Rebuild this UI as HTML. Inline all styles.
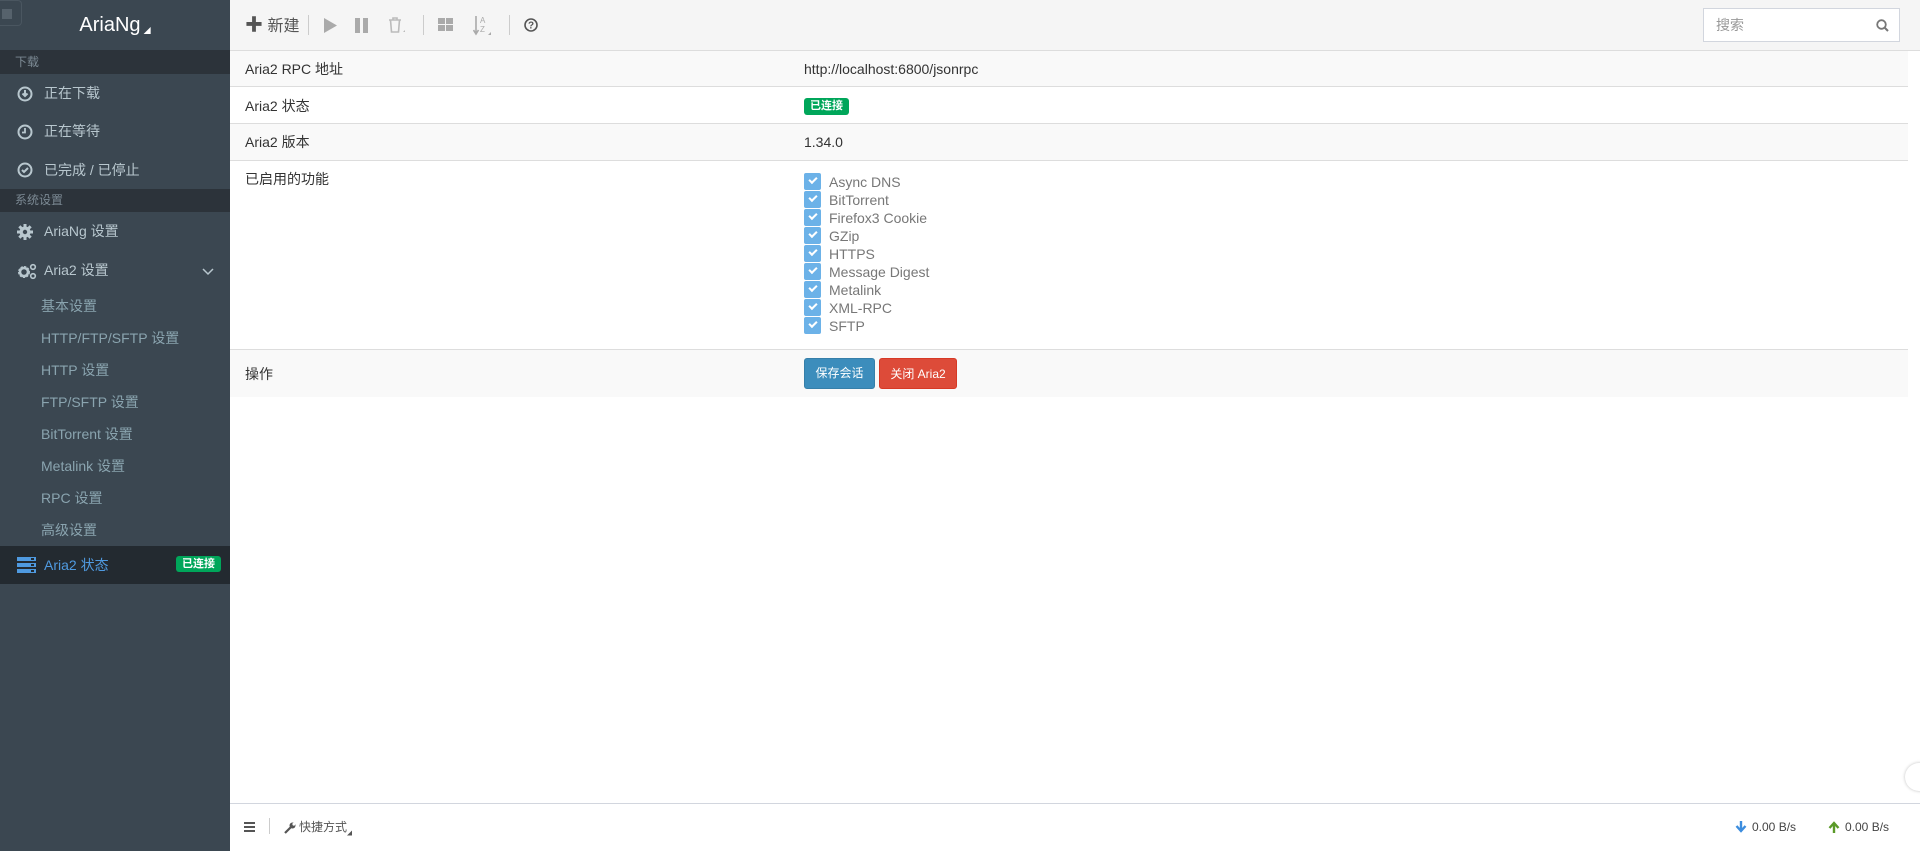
<!DOCTYPE html>
<html><head><meta charset="utf-8">
<style>
*{box-sizing:border-box;margin:0;padding:0}
body{width:1920px;height:851px;overflow:hidden;font-family:"Liberation Sans","Noto Sans CJK SC",sans-serif;font-size:14px;color:#333;background:#fff;position:relative}
.sb{position:absolute;left:0;top:0;width:230px;height:851px;background:#3b4751}
.logo{height:51px;border-bottom:1px solid #2c333a;color:#fff;font-size:20px;text-align:center;line-height:50px;position:relative}
.logo .sq{position:absolute;left:0;top:0;width:22px;height:26px;border:1px solid #4a5660;border-left:none;border-radius:0 4px 4px 0}
.logo .sq i{position:absolute;left:2px;top:8px;width:10px;height:10px;background:#56626c}
.sec{height:23px;background:#2c333a;color:#7c8a94;font-size:12px;line-height:23px;padding-left:15px}
.it{height:38px;line-height:38px;color:#b8c7ce;padding-left:44px;position:relative;font-size:14px}
.it svg{position:absolute;left:17px;top:12px}
.sub{height:32px;line-height:32px;color:#8aa4af;padding-left:41px}
.act{height:38px;line-height:38px;background:#232a30;color:#4f9ae0;padding-left:44px;position:relative;margin-top:0}
.badge{display:inline-block;background:#00a65a;color:#fff;font-size:11px;font-weight:bold;border-radius:3px;line-height:17px;padding:0 6px}
.tb{position:absolute;left:230px;top:0;right:0;height:51px;background:#f5f5f5;border-bottom:1px solid #ddd}
.tb .x{position:absolute;top:0;line-height:50px;color:#555;font-size:16px}
.sep{position:absolute;top:15px;width:1px;height:20px;background:#ccc}
.search{position:absolute;left:1473px;top:8px;width:197px;height:34px;border:1px solid #d2d6de;background:#fff;color:#999;font-size:14px;line-height:32px;padding-left:12px}
.tbl{position:absolute;left:230px;top:51px;width:1678px}
.row{position:relative;border-bottom:1px solid #ddd}
.row.g{background:#f9f9f9}
.lab,.val{position:absolute;top:9px;line-height:18px}
.lab{left:15px}
.val{left:574px}
.chk{height:18px;line-height:18px;color:#777;position:relative;padding-left:25px}
.chk i{position:absolute;left:0;top:0;width:17px;height:17px;background:#6cb2e8;border-radius:2px}
.chk i:after{content:"";position:absolute;left:5px;top:4px;width:6px;height:3px;border-left:2px solid #fff;border-bottom:2px solid #fff;transform:rotate(-45deg)}
.btn{position:absolute;top:8px;height:31px;line-height:28px;color:#fff;font-size:12px;border-radius:3px;text-align:center}
.ft{position:absolute;left:230px;right:0;top:803px;height:48px;border-top:1px solid #d2d6de;background:#fff;font-size:12px;color:#444}
</style></head><body>
<div class="sb">
 <div class="logo"><div class="sq"><i></i></div>AriaNg<span style="font-size:7px;vertical-align:-2px;margin-left:3px">◢</span></div>
 <div class="sec">下载</div>
 <div class="it"><svg width="16" height="16" viewBox="0 0 16 16"><circle cx="8" cy="8" r="6.5" fill="none" stroke="#b8c7ce" stroke-width="2"/><path d="M8 4v6M5.5 7.5L8 10l2.5-2.5" stroke="#b8c7ce" stroke-width="2" fill="none"/></svg>正在下载</div>
 <div class="it"><svg width="16" height="16" viewBox="0 0 16 16"><circle cx="8" cy="8" r="6.5" fill="none" stroke="#b8c7ce" stroke-width="2"/><path d="M8 4v4.5H5" stroke="#b8c7ce" stroke-width="1.8" fill="none"/></svg>正在等待</div>
 <div class="it" style="height:39px;line-height:40px"><svg width="16" height="16" viewBox="0 0 16 16"><circle cx="8" cy="8" r="6.5" fill="none" stroke="#b8c7ce" stroke-width="2"/><path d="M5 8l2 2 4-4" stroke="#b8c7ce" stroke-width="2" fill="none"/></svg>已完成 / 已停止</div>
 <div class="sec">系统设置</div>
 <div class="it" style="height:39px;line-height:39px"><svg width="16" height="16" viewBox="0 0 16 16"><g fill="#b8c7ce"><rect x="6.5" y="0" width="3" height="16"/><rect x="0" y="6.5" width="16" height="3"/><rect x="6.5" y="0" width="3" height="16" transform="rotate(45 8 8)"/><rect x="6.5" y="0" width="3" height="16" transform="rotate(-45 8 8)"/><circle cx="8" cy="8" r="5.5"/></g><circle cx="8" cy="8" r="2.2" fill="#3b4751"/></svg>AriaNg 设置</div>
 <div class="it" style="height:39px;line-height:39px"><svg width="20" height="18" viewBox="0 0 20 18"><circle cx="7" cy="9" r="4.5" fill="none" stroke="#b8c7ce" stroke-width="3" stroke-dasharray="2 1"/><circle cx="7" cy="9" r="4" fill="none" stroke="#b8c7ce" stroke-width="2.5"/><circle cx="16" cy="4" r="2.3" fill="none" stroke="#b8c7ce" stroke-width="1.6"/><circle cx="16" cy="13" r="2.3" fill="none" stroke="#b8c7ce" stroke-width="1.6"/></svg>Aria2 设置<svg style="left:202px;top:17px" width="12" height="8" viewBox="0 0 12 8"><path d="M1 1l5 5 5-5" stroke="#b8c7ce" stroke-width="1.5" fill="none"/></svg></div>
 <div class="sub">基本设置</div>
 <div class="sub">HTTP/FTP/SFTP 设置</div>
 <div class="sub">HTTP 设置</div>
 <div class="sub">FTP/SFTP 设置</div>
 <div class="sub">BitTorrent 设置</div>
 <div class="sub">Metalink 设置</div>
 <div class="sub">RPC 设置</div>
 <div class="sub">高级设置</div>
 <div class="act"><svg style="position:absolute;left:17px;top:11px" width="19" height="16" viewBox="0 0 19 16"><rect x="0" y="0" width="19" height="4" fill="#4f9ae0"/><rect x="0" y="6" width="19" height="4" fill="#4f9ae0"/><rect x="0" y="12" width="19" height="4" fill="#4f9ae0"/><rect x="14" y="1" width="3" height="2" fill="#232a30"/><rect x="14" y="7" width="3" height="2" fill="#232a30"/><rect x="14" y="13" width="3" height="2" fill="#232a30"/></svg>Aria2 状态<span class="badge" style="position:absolute;left:176px;top:10px;line-height:16px">已连接</span></div>
</div>
<div class="tb">
 <div class="x" style="left:15px"><b style="font-size:18px">✚</b> 新建</div>
 <div class="sep" style="left:78px"></div>
 <svg style="position:absolute;left:93px;top:18px" width="14" height="15"><path d="M1 0l13 7.5L1 15z" fill="#aaa"/></svg>
 <svg style="position:absolute;left:125px;top:18px" width="14" height="15"><rect width="5" height="15" fill="#aaa"/><rect x="8" width="5" height="15" fill="#aaa"/></svg>
 <svg style="position:absolute;left:158px;top:17px" width="18" height="18"><path d="M1 3h12M5 3V1h4v2M2.5 3l1 12h7l1-12" stroke="#bbb" stroke-width="1.6" fill="none"/><path d="M15 15l2-2v2z" fill="#bbb"/></svg>
 <div class="sep" style="left:193px"></div>
 <svg style="position:absolute;left:208px;top:18px" width="15" height="14"><rect width="7" height="6" fill="#aaa"/><rect x="8" width="7" height="6" fill="#aaa"/><rect y="7" width="7" height="6" fill="#aaa"/><rect x="8" y="7" width="7" height="6" fill="#aaa"/></svg>
 <svg style="position:absolute;left:243px;top:15px" width="20" height="22"><path d="M3 1v17M0.5 15L3 19l2.5-4" stroke="#aaa" stroke-width="1.6" fill="none"/><text x="7" y="8" font-size="8" fill="#aaa" font-family="Liberation Sans">A</text><text x="7" y="17" font-size="8" fill="#aaa" font-family="Liberation Sans">Z</text><path d="M15 20l3-3v3z" fill="#aaa"/></svg>
 <div class="sep" style="left:279px"></div>
 <svg style="position:absolute;left:294px;top:18px" width="14" height="14"><circle cx="7" cy="7" r="6" fill="none" stroke="#555" stroke-width="1.6"/><text x="7" y="10.5" font-size="10" font-weight="bold" text-anchor="middle" fill="#555" font-family="Liberation Sans">?</text></svg>
 <div class="search">搜索<svg style="position:absolute;right:10px;top:10px" width="13" height="13"><circle cx="5.5" cy="5.5" r="4.3" fill="none" stroke="#777" stroke-width="1.8"/><path d="M8.5 8.5l3.5 3.5" stroke="#777" stroke-width="2"/></svg></div>
</div>
<div class="tbl">
 <div class="row g" style="height:36px"><span class="lab">Aria2 RPC 地址</span><span class="val">http://localhost:6800/jsonrpc</span></div>
 <div class="row" style="height:37px"><span class="lab" style="top:10px">Aria2 状态</span><span class="val" style="top:8px"><span class="badge">已连接</span></span></div>
 <div class="row g" style="height:37px"><span class="lab">Aria2 版本</span><span class="val">1.34.0</span></div>
 <div class="row" style="height:189px"><span class="lab">已启用的功能</span>
  <div class="val" style="top:12px">
   <div class="chk"><i></i>Async DNS</div><div class="chk"><i></i>BitTorrent</div><div class="chk"><i></i>Firefox3 Cookie</div><div class="chk"><i></i>GZip</div><div class="chk"><i></i>HTTPS</div><div class="chk"><i></i>Message Digest</div><div class="chk"><i></i>Metalink</div><div class="chk"><i></i>XML-RPC</div><div class="chk"><i></i>SFTP</div>
  </div></div>
 <div class="row g" style="height:47px;border-bottom:none"><span class="lab" style="top:15px">操作</span>
  <div class="btn" style="left:574px;width:71px;background:#3c8dbc;border:1px solid #367fa9">保存会话</div>
  <div class="btn" style="left:649px;width:78px;background:#dd4b39;border:1px solid #d73925;line-height:30px">关闭 Aria2</div>
 </div>
</div>
<div style="position:absolute;left:1905px;top:763px;width:30px;height:28px;border-radius:14px;background:#fff;box-shadow:0 0 3px rgba(0,0,0,.25)"></div>
<div class="ft">
 <div style="position:absolute;left:14px;top:18px;width:11px;height:10px;border-top:2px solid #555;border-bottom:2px solid #555"><div style="margin-top:2px;height:2px;background:#555"></div></div>
 <div style="position:absolute;left:39px;top:14px;width:1px;height:16px;background:#ccc"></div>
 <svg style="position:absolute;left:54px;top:18px" width="12" height="12" viewBox="0 0 12 12"><path d="M1 11l6-6" stroke="#555" stroke-width="2.2"/><circle cx="8.5" cy="3.5" r="3" fill="#555"/><circle cx="9.8" cy="2.2" r="1.4" fill="#fff"/></svg>
 <div style="position:absolute;left:69px;top:14px;line-height:18px;color:#555">快捷方式<span style="font-size:5px;vertical-align:-4px">◢</span></div>
 <svg style="position:absolute;left:1505px;top:17px" width="12" height="12"><path d="M6 0v9M1.5 5L6 10l4.5-5" stroke="#3c8dde" stroke-width="2.4" fill="none"/></svg>
 <div style="position:absolute;left:1522px;top:14px;line-height:18px">0.00 B/s</div>
 <svg style="position:absolute;left:1598px;top:17px" width="12" height="12"><path d="M6 12V3M1.5 7L6 2l4.5 5" stroke="#5a9a28" stroke-width="2.4" fill="none"/></svg>
 <div style="position:absolute;left:1615px;top:14px;line-height:18px">0.00 B/s</div>
</div>
</body></html>
